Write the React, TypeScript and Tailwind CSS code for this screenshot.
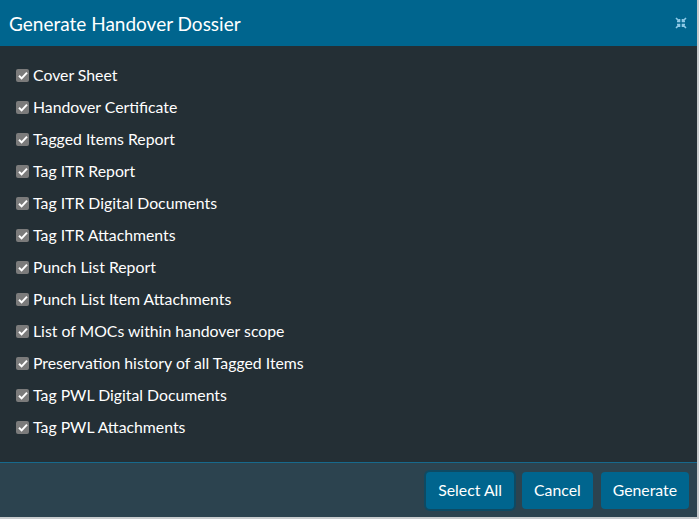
import { useState } from "react";

const ITEMS = [
  "Cover Sheet",
  "Handover Certificate",
  "Tagged Items Report",
  "Tag ITR Report",
  "Tag ITR Digital Documents",
  "Tag ITR Attachments",
  "Punch List Report",
  "Punch List Item Attachments",
  "List of MOCs within handover scope",
  "Preservation history of all Tagged Items",
  "Tag PWL Digital Documents",
  "Tag PWL Attachments",
];

function CompressIcon() {
  return (
    <svg width="12" height="12" viewBox="0 0 12 12" fill="none" stroke="#8ec9e6" strokeWidth="1.6">
      <path d="M1 1l3.5 3.5M4.5 2v2.5H2" />
      <path d="M11 1L7.5 4.5M7.5 2v2.5H10" />
      <path d="M1 11l3.5-3.5M4.5 10V7.5H2" />
      <path d="M11 11L7.5 7.5M7.5 10V7.5H10" />
    </svg>
  );
}

function Check({ checked }: { checked: boolean }) {
  return (
    <span className="w-[13px] h-[13px] rounded-[2px] bg-[#7b7b7b] flex items-center justify-center shrink-0">
      {checked && (
        <svg width="10" height="9" viewBox="0 0 10 9">
          <path d="M1 4.8l2.6 2.6L9 1.6" stroke="#fff" strokeWidth="2" fill="none" />
        </svg>
      )}
    </span>
  );
}

export default function App() {
  const [checked, setChecked] = useState<boolean[]>(ITEMS.map(() => true));

  return (
    <div className="w-[699px] h-[519px] bg-[#c9ccce] font-['Lato','Open_Sans',sans-serif]">
      <div className="w-[697px] h-[517px] flex flex-col bg-[#242f35]">
        <div className="h-[46px] bg-[#00658e] flex items-center justify-between pl-[9px] pr-[10px] shrink-0">
          <h1 className="text-white text-[19px] leading-none">Generate Handover Dossier</h1>
          <CompressIcon />
        </div>

        <div className="flex-1 pt-[13px] pl-[16px] flex flex-col">
          {ITEMS.map((label, i) => (
            <label
              key={label}
              className="h-[32px] flex items-center gap-[4px] text-white text-[15.8px] cursor-pointer"
              onClick={() => setChecked((c) => c.map((v, j) => (j === i ? !v : v)))}
            >
              <Check checked={checked[i]} />
              <span>{label}</span>
            </label>
          ))}
        </div>

        <div className="h-[55px] shrink-0 border-t border-[#17698c] bg-[#2c434f] flex items-center justify-end gap-[8px] pr-[8px]">
          <button
            onClick={() => setChecked(ITEMS.map(() => true))}
            className="h-[37px] px-[12px] rounded-[4px] bg-[#00658e] text-white text-[15.8px] ring-2 ring-[#0e4a63]"
          >
            Select All
          </button>
          <button className="h-[37px] px-[12px] rounded-[4px] bg-[#00658e] text-white text-[15.8px]">
            Cancel
          </button>
          <button className="h-[37px] px-[12px] rounded-[4px] bg-[#00658e] text-white text-[15.8px]">
            Generate
          </button>
        </div>
      </div>
    </div>
  );
}
